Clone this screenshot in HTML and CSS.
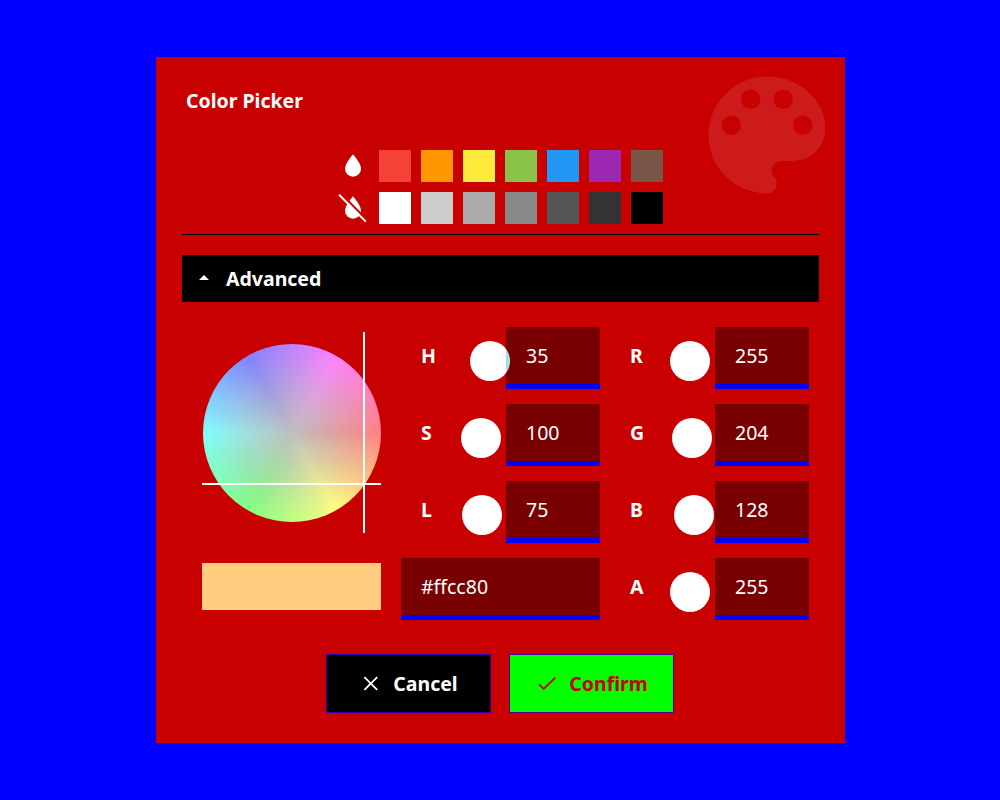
FILE: index.html
```
<!DOCTYPE html>
<html lang="en">
<head>
<meta charset="utf-8">
<title>Color Picker</title>
<link rel="stylesheet" href="styles.css">
</head>
<body>
<main class="dialog">
  <svg class="palette-art" viewBox="0 0 24 24"><path d="M17.5,12A1.5,1.5 0 0,1 16,10.5A1.5,1.5 0 0,1 17.5,9A1.5,1.5 0 0,1 19,10.5A1.5,1.5 0 0,1 17.5,12M14.5,8A1.5,1.5 0 0,1 13,6.5A1.5,1.5 0 0,1 14.5,5A1.5,1.5 0 0,1 16,6.5A1.5,1.5 0 0,1 14.5,8M9.5,8A1.5,1.5 0 0,1 8,6.5A1.5,1.5 0 0,1 9.5,5A1.5,1.5 0 0,1 11,6.5A1.5,1.5 0 0,1 9.5,8M6.5,12A1.5,1.5 0 0,1 5,10.5A1.5,1.5 0 0,1 6.5,9A1.5,1.5 0 0,1 8,10.5A1.5,1.5 0 0,1 6.5,12M12,3A9,9 0 0,0 3,12A9,9 0 0,0 12,21A1.5,1.5 0 0,0 13.5,19.5C13.5,19.11 13.35,18.76 13.11,18.5C12.88,18.23 12.73,17.88 12.73,17.5A1.5,1.5 0 0,1 14.23,16H16A5,5 0 0,0 21,11C21,6.58 16.97,3 12,3Z"/></svg>
  <h1 class="title">Color Picker</h1>

  <section class="presets">
    <svg class="drop" viewBox="0 0 24 24"><path d="M12,20A6,6 0 0,1 6,14C6,10 12,3.25 12,3.25C12,3.25 18,10 18,14A6,6 0 0,1 12,20Z"/></svg>
    <span class="swatch" style="background:#f44336"></span>
    <span class="swatch" style="background:#ff9800"></span>
    <span class="swatch" style="background:#ffeb3b"></span>
    <span class="swatch" style="background:#8bc34a"></span>
    <span class="swatch" style="background:#2196f3"></span>
    <span class="swatch" style="background:#9c27b0"></span>
    <span class="swatch" style="background:#795548"></span>
    <svg class="drop" viewBox="0 0 24 24"><path d="M12,20A6,6 0 0,1 6,14C6,10 12,3.25 12,3.25C12,3.25 18,10 18,14A6,6 0 0,1 12,20Z"/><path class="slash-gap" d="M3 1.3L21 19.5"/><path class="slash" d="M2.1 2.6L21.1 21.7"/></svg>
    <span class="swatch" style="background:#ffffff"></span>
    <span class="swatch" style="background:#cccccc"></span>
    <span class="swatch" style="background:#aaaaaa"></span>
    <span class="swatch" style="background:#888888"></span>
    <span class="swatch" style="background:#555555"></span>
    <span class="swatch" style="background:#333333"></span>
    <span class="swatch" style="background:#000000"></span>
  </section>

  <div class="accordion">
    <svg class="caret" viewBox="0 0 10 5"><path d="M0 5L5 0L10 5Z"/></svg>
    <span>Advanced</span>
  </div>

  <section class="editor">
    <div class="visual">
      <div class="wheel-area">
        <div class="wheel"></div>
        <i class="cross-v"></i>
        <i class="cross-h"></i>
      </div>
      <div class="preview"></div>
    </div>
    <div class="channels">
      <div class="channel"><b>H</b><i class="knob" style="margin-left:49px"></i><span class="field over">35</span></div>
      <div class="channel"><b>S</b><i class="knob" style="margin-left:40px"></i><span class="field">100</span></div>
      <div class="channel"><b>L</b><i class="knob" style="margin-left:41px"></i><span class="field">75</span></div>
      <span class="field hex">#ffcc80</span>
    </div>
    <div class="channels">
      <div class="channel"><b>R</b><i class="knob" style="margin-left:40px"></i><span class="field">255</span></div>
      <div class="channel"><b>G</b><i class="knob" style="margin-left:42px"></i><span class="field">204</span></div>
      <div class="channel"><b>B</b><i class="knob" style="margin-left:44px"></i><span class="field">128</span></div>
      <div class="channel"><b>A</b><i class="knob" style="margin-left:40px"></i><span class="field">255</span></div>
    </div>
  </section>

  <footer class="actions">
    <button class="btn cancel"><svg viewBox="0 0 24 24"><path d="M5.4 5.1L18.2 17.9M18.2 5.1L5.4 17.9"/></svg><span>Cancel</span></button>
    <button class="btn confirm"><svg viewBox="0 0 24 24"><path d="M4.1 12.3L8.7 16.9L20.3 5.6"/></svg><span>Confirm</span></button>
  </footer>
</main>
</body>
</html>
```
FILE: styles.css
```
* { box-sizing: border-box; }
body {
  margin: 0;
  height: 800px;
  padding: 57px 155px 57px 156px;
  background: #0000ff;
  color: #fff;
  font: 19.5px/26px "Noto Sans", sans-serif;
}
.dialog {
  position: relative;
  height: 686px;
  padding: 31px 26px 30px;
  background: #c80000;
}
.palette-art {
  position: absolute;
  top: 0;
  right: 0;
  width: 156px;
  height: 156px;
  fill: #fff;
  opacity: .1;
}
.title {
  margin: 0 0 36px;
  padding-left: 4px;
  font-size: 19.5px;
  line-height: 26px;
  font-weight: 700;
}
.presets {
  display: grid;
  grid-template-columns: repeat(8, 32px);
  gap: 10px;
  justify-content: center;
  padding: 0 1px 10px 0;
  border-bottom: 1px solid #000;
}
.swatch, .drop { display: block; width: 32px; height: 32px; }
.drop { fill: #fff; }
.slash, .slash-gap { fill: none; stroke: #fff; stroke-width: 1.6; }
.slash { stroke-linecap: square; stroke-width: 1.5; }
.slash-gap { stroke: #c80000; }
.accordion {
  display: flex;
  align-items: center;
  gap: 17px;
  height: 47px;
  margin-top: 20px;
  padding-left: 17px;
  background: #000;
  font-weight: 700;
}
.caret { width: 10px; height: 5px; margin-bottom: 2px; fill: #fff; }
.editor {
  display: grid;
  grid-template-columns: 179px 199px 199px;
  column-gap: 20px;
  padding: 25px 10px 0 20px;
}
.channels { display: grid; grid-auto-rows: 62px; row-gap: 15px; }
.channels + .channels { margin-left: -10px; width: 199px; }
.wheel-area { position: relative; height: 201px; margin: 5px 0 30px; padding: 12px 0 0 1px; }
.wheel {
  width: 178px;
  height: 178px;
  border-radius: 50%;
  background:
    radial-gradient(circle closest-side, #bfbfbf, rgba(191, 191, 191, 0)),
    conic-gradient(from 90deg, #ff8080, #ffff80, #80ff80, #80ffff, #8080ff, #ff80ff, #ff8080);
}
.cross-v, .cross-h { position: absolute; background: #fff; }
.cross-v { left: 161px; top: 0; width: 2px; height: 201px; }
.cross-h { left: 0; top: 151px; width: 179px; height: 2px; }
.preview { height: 47px; background: #ffcc80; }
.channel { display: flex; padding-left: 20px; }
.channel b { width: 0; padding-top: 16px; }
.knob { flex: none; width: 40px; height: 40px; margin-top: 14px; border-radius: 50%; background: #fff; }
.field {
  width: 94px;
  height: 62px;
  margin-left: auto;
  padding: 16px 20px 0;
  border-bottom: 5px solid #0000ff;
  background: #780000;
}
.over {
  margin-left: -4px;
  background: radial-gradient(circle at -16px 34px, #a8e0e0 19.6px, #780000 20.4px);
}
.hex { width: 199px; margin: 0; }
.actions { display: flex; justify-content: center; gap: 18px; margin-top: 34px; padding-right: 1px; }
.btn {
  display: flex;
  align-items: center;
  justify-content: center;
  gap: 10px;
  width: 165px;
  height: 59px;
  padding: 0;
  border: 1px solid #3200b4;
  font: 700 19.5px/26px "Noto Sans", sans-serif;
}
.btn svg { width: 24px; height: 24px; fill: none; stroke: currentColor; stroke-width: 1.8; }
.cancel { background: #000; color: #fff; }
.confirm { background: #00ff00; color: #c80000; border-color: #500096; }
```
